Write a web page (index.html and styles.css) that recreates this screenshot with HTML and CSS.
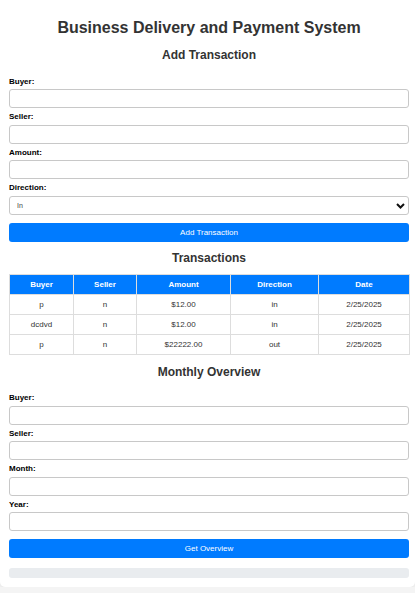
FILE: index.html
```html
<!DOCTYPE html>
<html lang="en">
<head>
<meta charset="utf-8">
<title>Business Delivery and Payment System</title>
<link rel="stylesheet" href="styles.css">
</head>
<body>
<div class="container">
  <h1 class="title">Business Delivery and Payment System</h1>

  <h2 class="section-title form-title">Add Transaction</h2>
  <form class="form">
    <label class="label">Buyer:</label>
    <input class="field" type="text">
    <label class="label">Seller:</label>
    <input class="field" type="text">
    <label class="label">Amount:</label>
    <input class="field" type="text">
    <label class="label">Direction:</label>
    <div class="select-wrap">
      <select class="field select">
        <option>In</option>
        <option>Out</option>
      </select>
      <svg class="chevron" width="9" height="6" viewBox="0 0 9 6"><path d="M1 1 L4.5 4.5 L8 1" fill="none" stroke="#111" stroke-width="2"/></svg>
    </div>
    <button class="btn" type="button">Add Transaction</button>
  </form>

  <h2 class="section-title table-title">Transactions</h2>
  <table class="table">
    <colgroup>
      <col class="c1"><col class="c2"><col class="c3"><col class="c4"><col class="c5">
    </colgroup>
    <thead>
      <tr><th>Buyer</th><th>Seller</th><th>Amount</th><th>Direction</th><th>Date</th></tr>
    </thead>
    <tbody>
      <tr><td>p</td><td>n</td><td>$12.00</td><td>in</td><td>2/25/2025</td></tr>
      <tr><td>dcdvd</td><td>n</td><td>$12.00</td><td>in</td><td>2/25/2025</td></tr>
      <tr><td>p</td><td>n</td><td>$22222.00</td><td>out</td><td>2/25/2025</td></tr>
    </tbody>
  </table>

  <h2 class="section-title form-title">Monthly Overview</h2>
  <form class="form">
    <label class="label">Buyer:</label>
    <input class="field" type="text">
    <label class="label">Seller:</label>
    <input class="field" type="text">
    <label class="label">Month:</label>
    <input class="field" type="text">
    <label class="label">Year:</label>
    <input class="field" type="text">
    <button class="btn" type="button">Get Overview</button>
  </form>
  <div class="result"></div>
</div>
</body>
</html>
```
FILE: styles.css
```css
* { box-sizing: border-box; }

html, body {
  margin: 0;
  background: #f4f4f4;
  font-family: "Liberation Sans", Arial, sans-serif;
  color: #333;
}

.container {
  background: #fff;
  padding: 9px 6px 9px 9px;
  border-radius: 0 0 5px 5px;
  box-shadow: 0 0 4px rgba(0, 0, 0, 0.1);
}

.title {
  font-size: 16px;
  line-height: 19px;
  margin: 9px 0 11px;
  text-align: center;
  color: #333;
}

.section-title {
  font-size: 12px;
  line-height: 14px;
  margin: 10px 0;
  text-align: center;
  color: #333;
}

.form-title { margin-bottom: 14.5px; }

.table-title { margin: 9px 0; }

.form {
  display: flex;
  flex-direction: column;
  margin: 0;
}

.label {
  display: block;
  font-size: 8px;
  line-height: 10.5px;
  font-weight: bold;
  color: #000;
  margin-bottom: 2px;
}

.field {
  display: block;
  width: 100%;
  height: 19px;
  margin: 0 0 4px;
  padding: 0 7px;
  border: 1px solid #c8c8c8;
  border-radius: 3px;
  background: #fff;
  font-family: inherit;
  font-size: 7px;
  color: #444;
}

.select-wrap {
  position: relative;
}

.select {
  appearance: none;
  -webkit-appearance: none;
}

.chevron {
  position: absolute;
  right: 4px;
  top: 7px;
}

.btn {
  display: block;
  width: 100%;
  height: 19px;
  margin-top: 4px;
  border: none;
  border-radius: 3px;
  background: #007bff;
  color: #fff;
  font-family: inherit;
  font-size: 8px;
  padding: 0;
}

.table {
  width: 100%;
  border-collapse: collapse;
  table-layout: fixed;
  font-size: 8px;
}

.c1 { width: 64px; }
.c2 { width: 63px; }
.c3 { width: 94px; }
.c4 { width: 88px; }
.c5 { width: 91px; }

.table th,
.table td {
  border: 1px solid #ddd;
  padding: 4px 2px;
  line-height: 11px;
  text-align: center;
}

.table th {
  background: #007bff;
  color: #fff;
  font-weight: bold;
}

.table td { color: #333; }

.result {
  margin-top: 9.5px;
  height: 10px;
  background: #e9ecef;
  border-radius: 3px;
}
```
